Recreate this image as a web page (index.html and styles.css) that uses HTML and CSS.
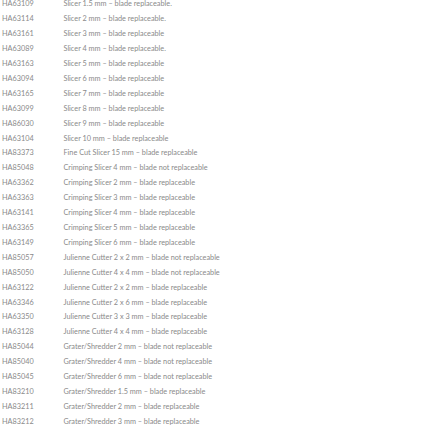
FILE: index.html
```html
<!DOCTYPE html>
<html lang="en">
<head>
    <meta charset="UTF-8">
    <meta name="viewport" content="width=device-width, initial-scale=1.0">
    <title>Slicer Blades</title>
    <link rel="stylesheet" href="styles.css">
</head>
<body>

<table class="parts">
    <tr><td class="code">HA63109</td><td>Slicer 1.5 mm – blade replaceable.</td></tr>
    <tr><td class="code">HA63114</td><td>Slicer 2 mm – blade replaceable.</td></tr>
    <tr><td class="code">HA63161</td><td>Slicer 3 mm – blade replaceable</td></tr>
    <tr><td class="code">HA63089</td><td>Slicer 4 mm – blade replaceable.</td></tr>
    <tr><td class="code">HA63163</td><td>Slicer 5 mm – blade replaceable</td></tr>
    <tr><td class="code">HA63094</td><td>Slicer 6 mm – blade replaceable</td></tr>
    <tr><td class="code">HA63165</td><td>Slicer 7 mm – blade replaceable</td></tr>
    <tr><td class="code">HA63099</td><td>Slicer 8 mm – blade replaceable</td></tr>
    <tr><td class="code">HA86030</td><td>Slicer 9 mm – blade replaceable</td></tr>
    <tr><td class="code">HA63104</td><td>Slicer 10 mm – blade replaceable</td></tr>
    <tr><td class="code">HA83373</td><td>Fine Cut Slicer 15 mm – blade replaceable</td></tr>
    <tr><td class="code">HA85048</td><td>Crimping Slicer 4 mm – blade not replaceable</td></tr>
    <tr><td class="code">HA63362</td><td>Crimping Slicer 2 mm – blade replaceable</td></tr>
    <tr><td class="code">HA63363</td><td>Crimping Slicer 3 mm – blade replaceable</td></tr>
    <tr><td class="code">HA63141</td><td>Crimping Slicer 4 mm – blade replaceable</td></tr>
    <tr><td class="code">HA63365</td><td>Crimping Slicer 5 mm – blade replaceable</td></tr>
    <tr><td class="code">HA63149</td><td>Crimping Slicer 6 mm – blade replaceable</td></tr>
    <tr><td class="code">HA85057</td><td>Julienne Cutter 2 x 2 mm – blade not replaceable</td></tr>
    <tr><td class="code">HA85050</td><td>Julienne Cutter 4 x 4 mm – blade not replaceable</td></tr>
    <tr><td class="code">HA63122</td><td>Julienne Cutter 2 x 2 mm – blade replaceable</td></tr>
    <tr><td class="code">HA63346</td><td>Julienne Cutter 2 x 6 mm – blade replaceable</td></tr>
    <tr><td class="code">HA63350</td><td>Julienne Cutter 3 x 3 mm – blade replaceable</td></tr>
    <tr><td class="code">HA63128</td><td>Julienne Cutter 4 x 4 mm – blade replaceable</td></tr>
    <tr><td class="code">HA85044</td><td>Grater/Shredder 2 mm – blade not replaceable</td></tr>
    <tr><td class="code">HA85040</td><td>Grater/Shredder 4 mm – blade not replaceable</td></tr>
    <tr><td class="code">HA85045</td><td>Grater/Shredder 6 mm – blade not replaceable</td></tr>
    <tr><td class="code">HA83210</td><td>Grater/Shredder 1.5 mm – blade replaceable</td></tr>
    <tr><td class="code">HA83211</td><td>Grater/Shredder 2 mm – blade replaceable</td></tr>
    <tr><td class="code">HA83212</td><td>Grater/Shredder 3 mm – blade replaceable</td></tr>
</table>

</body>
</html>
```

FILE: styles.css
```css
body {
    margin: 0;
    padding: 0;
    background-color: #fff;
    font-family: Lato, "Open Sans", sans-serif;
    color: #8a8a8a;
}

.parts {
    border-collapse: collapse;
    margin: -2.6px 0 0 2px;
    font-size: 7.3px;
}

.parts td {
    padding: 0;
    height: 14.9px;
    line-height: 14.9px;
    white-space: nowrap;
}

.parts .code {
    width: 61.5px;
}
```
